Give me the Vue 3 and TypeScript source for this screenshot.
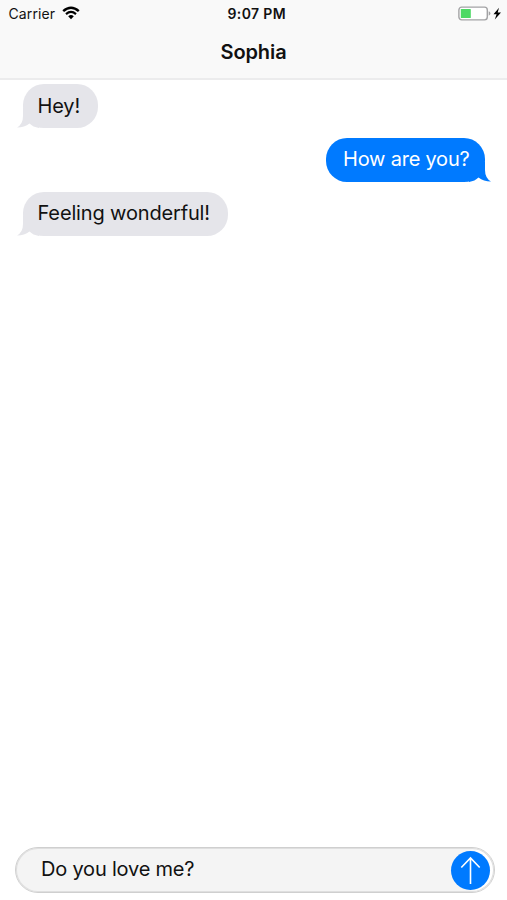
<script setup lang="ts">
import { ref } from 'vue'

interface Message {
  id: number
  text: string
  mine: boolean
}

const contact = 'Sophia'
const draft = ref('Do you love me?')
const messages = ref<Message[]>([
  { id: 1, text: 'Hey!', mine: false },
  { id: 2, text: 'How are you?', mine: true },
  { id: 3, text: 'Feeling wonderful!', mine: false },
])

function send() {
  const text = draft.value.trim()
  if (!text) return
  messages.value.push({ id: messages.value.length + 1, text, mine: true })
  draft.value = ''
}
</script>

<template>
  <div class="screen">
    <header class="header">
      <div class="status">
        <div class="carrier">
          <span>Carrier</span>
          <svg class="wifi" width="18" height="14" viewBox="0 0 18 14" fill="none">
            <path d="M1.2 5.1Q9 -1.7 16.8 5.1" stroke="#000" stroke-width="2.5" />
            <path d="M4 8.1Q9 3.8 14 8.1" stroke="#000" stroke-width="2.2" />
            <path d="M6.2 10.3Q9 7.8 11.8 10.3L9 13.2Z" fill="#000" />
          </svg>
        </div>
        <div class="time">9:07 PM</div>
        <div class="power">
          <svg width="44" height="16" viewBox="0 0 44 16">
            <rect x="0.9" y="1.1" width="28.4" height="12.8" rx="2.8" fill="#fff" stroke="#a3a3a5" stroke-width="1.4" />
            <rect x="2.8" y="3" width="10" height="9" rx="0.6" fill="#4cd964" />
            <path d="M30.700 5.300q1.700 .6 1.700 2.200t-1.700 2.200z" fill="#a3a3a5" />
            <path d="M41 1.700L35.500 8.200H38.600L36.800 13.600L43 6.600H39.700Z" fill="#000" />
          </svg>
        </div>
      </div>
      <h1 class="title">{{ contact }}</h1>
    </header>

    <main class="messages">
      <div v-for="m in messages" :key="m.id" class="row" :class="{ mine: m.mine }">
        <div class="bubble">
          <span class="text">{{ m.text }}</span>
          <svg class="tail" width="22" height="20" viewBox="0 0 22 20">
            <path d="M6 0V8Q6 16 0 19.600Q7.500 19.600 12.500 15.500Q16 19 22 20V0Z" />
          </svg>
        </div>
      </div>
    </main>

    <form class="composer" @submit.prevent="send">
      <input v-model="draft" class="field" type="text" aria-label="Message" />
      <button class="send" type="submit" aria-label="Send">
        <svg width="39" height="39" viewBox="0 0 39 39" fill="none" stroke="#fff" stroke-width="1.6">
          <path d="M19.500 33V7.500M10.300 16.500L19.500 7L28.700 16.500" />
        </svg>
      </button>
    </form>
  </div>
</template>

<style>
body {
  margin: 0;
  background: #fff;
}
</style>

<style scoped>
.screen {
  display: flex;
  flex-direction: column;
  box-sizing: border-box;
  height: 100vh;
  padding-bottom: 7px;
  overflow: hidden;
  background: #fff;
  color: #111;
  font-family: Inter, "Liberation Sans", sans-serif;
}

.header {
  box-sizing: border-box;
  height: 80px;
  flex: none;
  background: #f9f9f9;
  border-bottom: 2px solid #ececed;
}

.status {
  display: grid;
  grid-template-columns: 1fr auto 1fr;
  align-items: center;
  height: 27px;
  padding: 0 5px 0 8.5px;
}

.carrier {
  display: flex;
  align-items: center;
  gap: 6.5px;
  font-size: 14px;
  line-height: 27px;
  letter-spacing: 0.1px;
}

.wifi {
  margin-top: -1px;
}

.time {
  padding-left: 3px;
  font-size: 14px;
  font-weight: 600;
  letter-spacing: 0.35px;
}

.power {
  display: flex;
  justify-content: flex-end;
}

.title {
  margin: 0;
  font-size: 20px;
  font-weight: 600;
  line-height: 51px;
  text-align: center;
  letter-spacing: -0.1px;
}

.messages {
  display: flex;
  flex: 1;
  flex-direction: column;
  gap: 10px;
  padding: 4px 22px 0 23px;
}

.row {
  display: flex;
}

.row.mine {
  justify-content: flex-end;
}

.bubble {
  position: relative;
  height: 44px;
  box-sizing: border-box;
  padding: 0 18px 0 14.5px;
  border-radius: 21px;
  background: #e5e5ea;
  font-size: 20px;
  line-height: 43px;
  letter-spacing: -0.15px;
  white-space: nowrap;
}

.row:first-child .bubble {
  line-height: 44px;
}

.text {
  position: relative;
  z-index: 1;
}

.tail {
  position: absolute;
  bottom: 0;
  left: -6px;
  fill: #e5e5ea;
}

.mine .bubble {
  padding: 0 15.5px 0 17.5px;
  background: #007aff;
  color: #fff;
  letter-spacing: -0.22px;
}

.mine .tail {
  right: -6px;
  left: auto;
  fill: #007aff;
  transform: scaleX(-1);
}

.composer {
  display: flex;
  flex: none;
  align-items: center;
  box-sizing: border-box;
  height: 46px;
  margin: 0 12px 0 15px;
  padding: 0 4px 0 25px;
  border: 1px solid #cfcfcf;
  border-radius: 23px;
  background: linear-gradient(to right, #f4f4f4 calc(100% - 24px), #fff calc(100% - 16px));
  box-shadow: inset 0 0 0 1px #dfdfdf;
}

.field {
  flex: 1;
  min-width: 0;
  padding: 0 0 3px;
  border: 0;
  outline: 0;
  background: transparent;
  color: #111;
  font: 20px Inter, "Liberation Sans", sans-serif;
  letter-spacing: -0.2px;
}

.send {
  flex: none;
  width: 39px;
  height: 39px;
  margin-top: 1px;
  padding: 0;
  border: 0;
  border-radius: 50%;
  background: #007aff;
}

.send svg {
  display: block;
}
</style>
